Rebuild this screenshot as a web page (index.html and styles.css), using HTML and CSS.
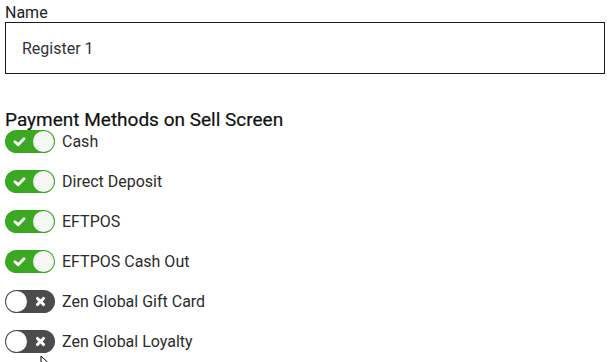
FILE: index.html
```html
<!DOCTYPE html>
<html>
<head>
<meta charset="utf-8">
<link rel="stylesheet" href="styles.css">
</head>
<body>
<div class="page">
  <label class="field-label">Name</label>
  <div class="input">Register 1</div>
  <h2 class="section-title">Payment Methods on Sell Screen</h2>
  <ul class="methods">
    <li class="method"><span class="toggle on"><svg class="icon" viewBox="0 0 12 12"><path d="M1.8 6.3 L4.7 9 L10.2 3.4" fill="none" stroke="#fff" stroke-width="2.6" stroke-linecap="round" stroke-linejoin="round"/></svg><span class="knob"></span></span><span class="method-name">Cash</span></li>
    <li class="method"><span class="toggle on"><svg class="icon" viewBox="0 0 12 12"><path d="M1.8 6.3 L4.7 9 L10.2 3.4" fill="none" stroke="#fff" stroke-width="2.6" stroke-linecap="round" stroke-linejoin="round"/></svg><span class="knob"></span></span><span class="method-name">Direct Deposit</span></li>
    <li class="method"><span class="toggle on"><svg class="icon" viewBox="0 0 12 12"><path d="M1.8 6.3 L4.7 9 L10.2 3.4" fill="none" stroke="#fff" stroke-width="2.6" stroke-linecap="round" stroke-linejoin="round"/></svg><span class="knob"></span></span><span class="method-name">EFTPOS</span></li>
    <li class="method"><span class="toggle on"><svg class="icon" viewBox="0 0 12 12"><path d="M1.8 6.3 L4.7 9 L10.2 3.4" fill="none" stroke="#fff" stroke-width="2.6" stroke-linecap="round" stroke-linejoin="round"/></svg><span class="knob"></span></span><span class="method-name">EFTPOS Cash Out</span></li>
    <li class="method"><span class="toggle off"><span class="knob"></span><svg class="icon" viewBox="0 0 12 12"><path d="M3.2 3.2 L8.8 8.8 M8.8 3.2 L3.2 8.8" fill="none" stroke="#fff" stroke-width="2.8" stroke-linecap="round"/></svg></span><span class="method-name">Zen Global Gift Card</span></li>
    <li class="method"><span class="toggle off"><span class="knob"></span><svg class="icon" viewBox="0 0 12 12"><path d="M3.2 3.2 L8.8 8.8 M8.8 3.2 L3.2 8.8" fill="none" stroke="#fff" stroke-width="2.8" stroke-linecap="round"/></svg></span><span class="method-name">Zen Global Loyalty</span></li>
  </ul>
</div>
<svg class="cursor" viewBox="0 0 12 18" width="12" height="18"><path d="M1 1 L1 15 L4.5 11.5 L7 17 L9 16 L6.5 10.5 L11 10.5 Z" fill="#fff" stroke="#000" stroke-width="1"/></svg>
</body>
</html>
```
FILE: styles.css
```css
html, body {
  margin: 0;
  padding: 0;
  background: #fff;
}
body {
  font-family: Roboto, "Liberation Sans", sans-serif;
  color: #222;
  overflow: hidden;
  position: relative;
  width: 611px;
  height: 362px;
}
.page {
  padding: 4px 6px 0 5px;
}
.field-label {
  display: block;
  font-size: 16px;
  line-height: 18px;
  color: #222;
}
.input {
  box-sizing: border-box;
  width: 600px;
  height: 52px;
  border: 1px solid #1a1a1a;
  padding: 0 16px;
  display: flex;
  align-items: center;
  font-size: 16px;
  color: #333;
}
.section-title {
  margin: 35px 0 0;
  font-family: Roboto, "Liberation Sans", sans-serif;
  font-size: 19px;
  line-height: 21px;
  font-weight: 400;
  -webkit-text-stroke: 0.2px #111;
  color: #111;
}
.methods {
  list-style: none;
  margin: 0;
  padding: 0;
  display: flex;
  flex-direction: column;
  gap: 17px;
}
.method {
  display: flex;
  align-items: center;
  gap: 7px;
  height: 23px;
}
.method-name {
  font-size: 16px;
  color: #2b2b2b;
}
.toggle {
  box-sizing: border-box;
  width: 50px;
  height: 23px;
  border-radius: 12px;
  padding: 1px;
  display: flex;
  align-items: center;
  justify-content: space-between;
}
.toggle.on {
  background: #3ba821;
  padding-left: 8px;
}
.toggle.off {
  background: #4b4b4b;
  padding-right: 8px;
}
.knob {
  width: 21px;
  height: 21px;
  border-radius: 50%;
  background: #f7f7f7;
}
.toggle.off .knob {
  background: #fff;
}
.icon {
  width: 13px;
  height: 13px;
  display: block;
}
.cursor {
  position: absolute;
  left: 40px;
  top: 355px;
}
```
